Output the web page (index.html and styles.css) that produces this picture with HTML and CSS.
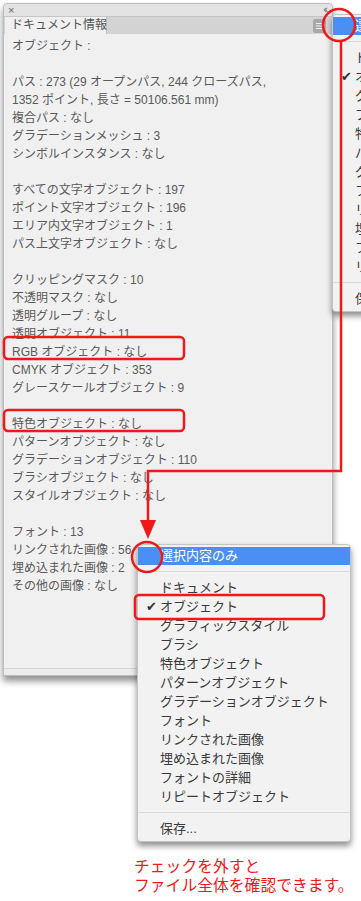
FILE: index.html
```html
<!DOCTYPE html>
<html lang="ja">

<head>
    <meta charset="UTF-8">
    <meta name="viewport" content="width=device-width, initial-scale=1.0">
    <title>ドキュメント情報</title>
    <link rel="stylesheet" href="styles.css">
</head>

<body>
    <!-- ドキュメント情報パネル -->
    <div class="panel">
        <div class="panel-top">
            <span class="close">×</span>
            <span class="collapse">‹‹</span>
        </div>
        <div class="panel-tabs">
            <div class="tab">ドキュメント情報</div>
            <div class="menu-btn">
                <svg width="13" height="14" viewBox="0 0 13 14">
                    <rect x="0" y="0" width="13" height="14" rx="2" fill="#a9a9a9"/>
                    <path d="M3 4.5h7M3 7h7M3 9.5h7" stroke="#efefef" stroke-width="1.2"/>
                </svg>
            </div>
        </div>
        <div class="panel-body">
            <div class="row">オブジェクト :</div>
            <div class="row"></div>
            <div class="row">パス : 273 (29 オープンパス, 244 クローズパス,</div>
            <div class="row">1352 ポイント, 長さ = 50106.561 mm)</div>
            <div class="row">複合パス : なし</div>
            <div class="row">グラデーションメッシュ : 3</div>
            <div class="row">シンボルインスタンス : なし</div>
            <div class="row"></div>
            <div class="row">すべての文字オブジェクト : 197</div>
            <div class="row">ポイント文字オブジェクト : 196</div>
            <div class="row">エリア内文字オブジェクト : 1</div>
            <div class="row">パス上文字オブジェクト : なし</div>
            <div class="row"></div>
            <div class="row">クリッピングマスク : 10</div>
            <div class="row">不透明マスク : なし</div>
            <div class="row">透明グループ : なし</div>
            <div class="row">透明オブジェクト : 11</div>
            <div class="row">RGB オブジェクト : なし</div>
            <div class="row">CMYK オブジェクト : 353</div>
            <div class="row">グレースケールオブジェクト : 9</div>
            <div class="row"></div>
            <div class="row">特色オブジェクト : なし</div>
            <div class="row">パターンオブジェクト : なし</div>
            <div class="row">グラデーションオブジェクト : 110</div>
            <div class="row">ブラシオブジェクト : なし</div>
            <div class="row">スタイルオブジェクト : なし</div>
            <div class="row"></div>
            <div class="row">フォント : 13</div>
            <div class="row">リンクされた画像 : 56</div>
            <div class="row">埋め込まれた画像 : 2</div>
            <div class="row">その他の画像 : なし</div>
        </div>
        <div class="panel-foot"></div>
    </div>

    <p class="note">チェックを外すと<br>ファイル全体を確認できます。</p>

    <!-- パネルメニュー（右上） -->
    <div class="menu-clip">
        <ul class="menu menu-top">
            <li class="sel">選択内容のみ</li>
            <li class="sep"></li>
            <li>ドキュメント</li>
            <li class="checked">オブジェクト</li>
            <li>グラフィックスタイル</li>
            <li>ブラシ</li>
            <li>特色オブジェクト</li>
            <li>パターンオブジェクト</li>
            <li>グラデーションオブジェクト</li>
            <li>フォント</li>
            <li>リンクされた画像</li>
            <li>埋め込まれた画像</li>
            <li>フォントの詳細</li>
            <li>リピートオブジェクト</li>
            <li class="sep"></li>
            <li>保存...</li>
        </ul>
    </div>

    <!-- パネルメニュー（拡大） -->
    <ul class="menu menu-big">
        <li class="sel">選択内容のみ</li>
        <li class="sep"></li>
        <li>ドキュメント</li>
        <li class="checked">オブジェクト</li>
        <li>グラフィックスタイル</li>
        <li>ブラシ</li>
        <li>特色オブジェクト</li>
        <li>パターンオブジェクト</li>
        <li>グラデーションオブジェクト</li>
        <li>フォント</li>
        <li>リンクされた画像</li>
        <li>埋め込まれた画像</li>
        <li>フォントの詳細</li>
        <li>リピートオブジェクト</li>
        <li class="sep"></li>
        <li>保存...</li>
    </ul>

    <!-- 赤い注釈 -->
    <svg class="marks" width="361" height="901" viewBox="0 0 361 901">
        <g fill="none" stroke="#f01818" stroke-width="2.5">
            <circle cx="339" cy="25" r="16"/>
            <path d="M341 41V471H148V522"/>
            <circle cx="147" cy="557" r="15"/>
            <rect x="4" y="337" width="180" height="22" rx="4"/>
            <rect x="4" y="410" width="180" height="21" rx="4"/>
            <rect x="135" y="595" width="189" height="24" rx="4"/>
        </g>
        <polygon points="140,520 156,520 148,539" fill="#f01818"/>
    </svg>
</body>

</html>
```

FILE: styles.css
```css
/* ドキュメント情報パネル */
html,
body {
    overflow: hidden;
}

body {
    margin: 0;
    background: #fff;
    font-family: 'Liberation Sans', 'Noto Sans CJK JP', sans-serif;
    position: relative;
    width: 361px;
    height: 901px;
}

.panel {
    box-sizing: border-box;
    width: 330px;
    margin: 3px 0 0 3px;
    border: 1px solid #bdbdbd;
    border-radius: 4px 4px 0 0;
    background: #f0f0f0;
    box-shadow: 0 5px 7px rgba(0, 0, 0, 0.45);
}

.panel-top {
    height: 12px;
    background: #e3e3e3;
    display: flex;
    justify-content: space-between;
    align-items: center;
    padding: 0 6px 0 4px;
    border-radius: 4px 4px 0 0;
    color: #666;
}

.close {
    font-size: 11px;
    line-height: 12px;
}

.collapse {
    font-size: 10px;
    line-height: 10px;
    letter-spacing: -2px;
}

.panel-tabs {
    height: 17px;
    background: #d3d3d3;
    border-top: 1px solid #c6c6c6;
    display: flex;
    justify-content: space-between;
    align-items: center;
}

.tab {
    align-self: stretch;
    width: 102px;
    margin-left: 1px;
    padding-left: 6px;
    box-sizing: border-box;
    background: #f0f0f0;
    border-right: 1px solid #c2c2c2;
    font-size: 12px;
    line-height: 17px;
    color: #555;
    white-space: nowrap;
}

.menu-btn {
    display: flex;
    margin-right: 6px;
}

.panel-body {
    height: 631px;
    padding: 3px 0 0 8px;
    font-size: 12px;
    line-height: 18px;
    color: #5a5a5a;
}

.row {
    height: 18px;
    white-space: nowrap;
}

.panel-foot {
    height: 6px;
    border-top: 1px solid #d6d6d6;
    background: #ececec;
}

.note {
    margin: 181px 0 0 134px;
    font-size: 15.8px;
    line-height: 19px;
    color: #f01818;
    white-space: nowrap;
}

/* メニュー */
.menu {
    position: absolute;
    margin: 0;
    padding: 2px 0 3px;
    list-style: none;
    background: #f2f2f2;
    border: 1px solid #c4c4c4;
    border-radius: 4px;
    box-shadow: 0 4px 6px rgba(0, 0, 0, 0.45);
    font-size: 13px;
    color: #3a3a3a;
}

.menu li {
    position: relative;
    height: 19px;
    line-height: 19px;
    padding-left: 22px;
    white-space: nowrap;
}

.menu .sel {
    height: 18px;
    line-height: 18px;
    background: #4b8ef4;
    color: #fff;
}

.menu .sep {
    height: 0;
    margin: 6px 0;
    border-top: 1px solid #d9d9d9;
}

.menu .checked::before {
    content: '✔';
    position: absolute;
    left: 8px;
    top: 0;
    font-family: 'DejaVu Sans', sans-serif;
    font-size: 13px;
    color: #333;
}

.menu-clip {
    position: absolute;
    left: 0;
    top: 0;
    width: 361px;
    height: 330px;
    overflow: hidden;
}

.menu-top {
    left: 332px;
    top: 14px;
    width: 200px;
}

.menu-big {
    left: 137px;
    top: 544px;
    width: 212px;
}

.marks {
    position: absolute;
    left: 0;
    top: 0;
    pointer-events: none;
}
```
